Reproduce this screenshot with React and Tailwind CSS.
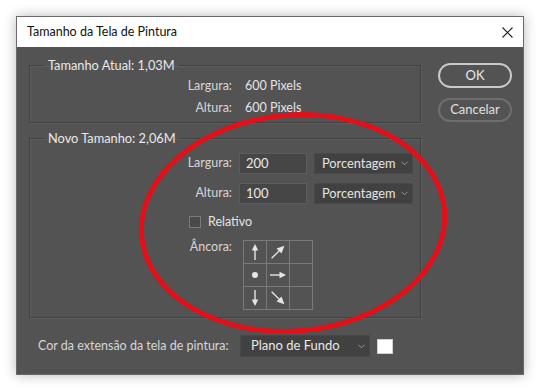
import React from 'react';

const font = { fontFamily: 'Lato, "Open Sans", sans-serif' };

const Chevron = () => (
    <svg width="7" height="5" viewBox="0 0 7 5" className="shrink-0">
        <path d="M0.5 0.8 L3.5 3.8 L6.5 0.8" fill="none" stroke="#9a9a9a" strokeWidth="1" />
    </svg>
);

const Select = ({ label, className }) => (
    <div className={`flex items-center justify-between bg-[#414141] border border-[#494949] pr-[4px] text-[12.8px] text-[#e4e4e4] ${className}`}>
        <span>{label}</span>
        <Chevron />
    </div>
);

const Arrow = ({ dir }) => {
    const rot = { up: 0, ne: 45, right: 90, se: 135, down: 180 }[dir];
    const diag = dir === 'ne' || dir === 'se';
    return (
        <svg width="20" height="20" viewBox="0 0 20 20">
            <g transform={`rotate(${rot} 10 10)`}>
                <line x1="10" y1={diag ? 19 : 18} x2="10" y2="7" stroke="#e6e6e6" strokeWidth="1.4" />
                <path d={diag ? 'M10 1 L13.5 8.5 L6.5 8.5 Z' : 'M10 2 L13.2 8.5 L6.8 8.5 Z'} fill="#e6e6e6" />
            </g>
        </svg>
    );
};

const AnchorGrid = () => {
    const cells = ['up', 'ne', null, 'dot', 'right', null, 'down', 'se', null];
    return (
        <div className="grid grid-cols-[repeat(3,23px)] grid-rows-[repeat(3,23px)] border-l border-t border-[#7a7a7a]">
            {cells.map((c, i) => (
                <div key={i} className="border-r border-b border-[#7a7a7a] flex items-center justify-center">
                    {c === 'dot' && <div className="w-[6px] h-[6px] rounded-full bg-[#e6e6e6]" />}
                    {c && c !== 'dot' && <Arrow dir={c} />}
                </div>
            ))}
        </div>
    );
};

const Group = ({ title, className, children }) => (
    <fieldset className={`border border-[#414141] shadow-[inset_1px_1px_0_#5d5d5d,1px_1px_0_#5d5d5d] ${className}`}>
        <legend className="ml-[14px] px-[4px] text-[12.8px] leading-[16px] text-[#e8e8e8]">{title}</legend>
        {children}
    </fieldset>
);

const App = () => {
    return (
        <div className="relative w-[540px] h-[391px] bg-white p-4 overflow-hidden" style={font}>
            <div className="w-[508px] h-[359px] flex flex-col border border-[#6a6a6a] shadow-[0_0_12px_rgba(0,0,0,0.28)]">
                <div className="h-[30px] bg-white flex items-center justify-between pl-[10px] pr-[10px] text-[12.5px] text-[#111]">
                    <span>Tamanho da Tela de Pintura</span>
                    <svg width="11" height="11" viewBox="0 0 11 11">
                        <path d="M0.5 0.5 L10.5 10.5 M10.5 0.5 L0.5 10.5" stroke="#222" strokeWidth="1.1" />
                    </svg>
                </div>

                <div className="flex-1 bg-[#535353] flex flex-col">
                    <div className="flex pl-[12px] pt-[10px]">
                        <div className="w-[392px] flex flex-col gap-[7px]">
                            <Group title="Tamanho Atual: 1,03M" className="h-[66px]">
                                <div className="pt-[2px] text-[12.5px] text-[#d6d6d6]">
                                    {[['Largura:', '600 Pixels'], ['Altura:', '600 Pixels']].map(([l, v]) => (
                                        <div key={l} className="flex h-[22px] items-center">
                                            <span className="w-[202px] text-right">{l}</span>
                                            <span className="ml-[13px] text-[#e4e4e4]">{v}</span>
                                        </div>
                                    ))}
                                </div>
                            </Group>

                            <Group title="Novo Tamanho: 2,06M" className="h-[188px]">
                                <div className="pt-[7px] text-[12.5px] text-[#d6d6d6] flex flex-col">
                                    {[['Largura:', '200'], ['Altura:', '100']].map(([l, v], i) => (
                                        <div key={l} className={`flex h-[21px] items-center ${i ? 'mt-[9px]' : ''}`}>
                                            <span className="w-[202px] text-right">{l}</span>
                                            <div className="ml-[7px] w-[68px] h-[21px] bg-[#464646] border border-[#5c5c5c] pl-[6px] flex items-center text-[13px] text-[#e8e8e8]">{v}</div>
                                            <Select label="Porcentagem" className="ml-[7px] w-[99px] h-[21px] pl-[7px]" />
                                        </div>
                                    ))}
                                    <div className="flex items-center mt-[12px] h-[12px] pl-[159px]">
                                        <div className="w-[12px] h-[12px] border border-[#7c7c7c] bg-[#4a4a4a]" />
                                        <span className="ml-[7px] text-[#e4e4e4]">Relativo</span>
                                    </div>
                                    <div className="flex mt-[12px]">
                                        <span className="w-[202px] text-right leading-[16px] mt-[-1px]">Âncora:</span>
                                        <div className="ml-[11px]">
                                            <AnchorGrid />
                                        </div>
                                    </div>
                                </div>
                            </Group>
                        </div>

                        <div className="ml-[17px] mt-[6px] flex flex-col gap-[10px]">
                            <button className="w-[74px] h-[25px] rounded-full border-2 border-[#c9c9c9] text-[13px] text-[#e8e8e8]">OK</button>
                            <button className="w-[74px] h-[24px] rounded-full border-2 border-[#6e6e6e] text-[13px] text-[#e0e0e0]">Cancelar</button>
                        </div>
                    </div>

                    <div className="flex items-center mt-[17px] pl-[21px] text-[12.5px] text-[#d6d6d6]">
                        <span className="w-[202px]">Cor da extensão da tela de pintura:</span>
                        <Select label="Plano de Fundo" className="w-[130px] h-[22px] text-[13px] text-[#e8e8e8] pl-[10px]" />
                        <div className="ml-[7px] w-[16px] h-[15px] bg-white border border-[#d0d0d0]" />
                    </div>
                </div>
            </div>

            <svg className="absolute inset-0 pointer-events-none" width="540" height="391">
                <ellipse cx="293" cy="223" rx="152" ry="108" fill="none" stroke="#e3101a" strokeWidth="5" transform="rotate(-5 293 223)" />
            </svg>
        </div>
    );
};

export default App;
